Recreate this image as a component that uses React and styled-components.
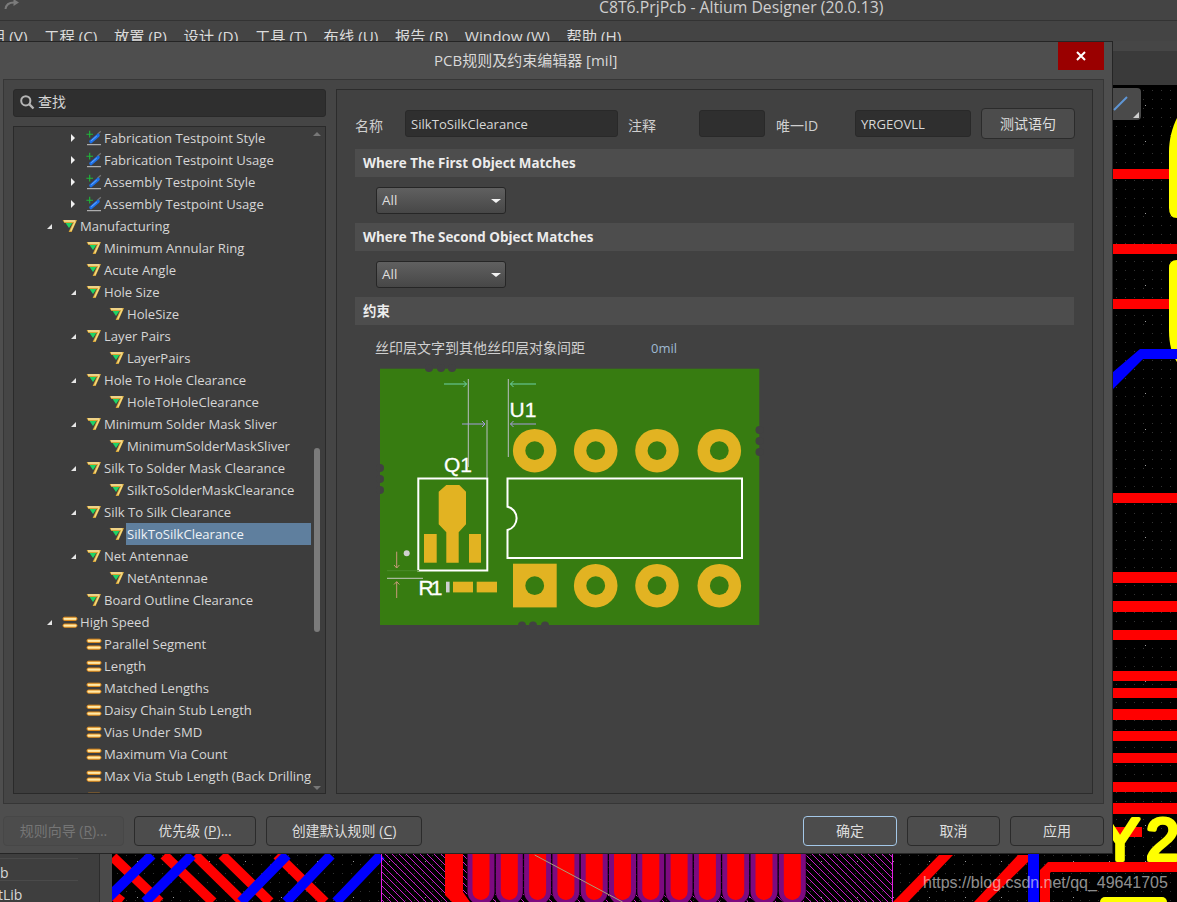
import React from "react";
import styled, { createGlobalStyle } from "styled-components";

const UI = `"Open Sans", "Noto Sans CJK SC", sans-serif`;
const CJK = `"Open Sans", "Noto Sans CJK SC", sans-serif`;

const Global = createGlobalStyle`
  html, body { margin: 0; padding: 0; background: #3c3c3c; }
  * { box-sizing: border-box; }
`;

const Page = styled.div`
  position: relative; width: 1177px; height: 902px; overflow: hidden;
  display: flex; flex-direction: column; background: #3c3c3c; font-family: ${UI}; color: #d6d6d6;
`;
const Chrome = styled.header`flex: none; height: 41px; background: #444; overflow: hidden;`;
const TitleRow = styled.div`
  height: 21px; border-bottom: 1px solid #333; padding-left: 599px; position: relative;
  font-size: 15.75px; line-height: 15px; color: #cfcfcf; white-space: nowrap;
`;
const RedoIcon = styled.svg`position: absolute; left: 4px; top: -1px;`;
const MenuRow = styled.nav`
  display: flex; gap: 16.7px; margin-left: -10px; height: 20px; padding-top: 5px;
  font-size: 15.3px; line-height: 20px; color: #dcdcdc; white-space: nowrap;
`;
const Workspace = styled.div`position: relative; flex: 1; display: flex; flex-direction: column; min-height: 0;`;
const ToolStrip = styled.div`flex: none; height: 44px; background: #3a3a3a; border-top: 10px solid #464646;`;
const Body = styled.div`flex: 1; display: flex; min-height: 0;`;
const SidePanel = styled.aside`
  flex: none; width: 100px; background: #3e3e3e; border-right: 1px solid #2c2c2c;
  display: flex; flex-direction: column; justify-content: flex-end;
`;
const SideRow = styled.div`
  height: 22px; width: 78px; border-top: 1px solid #4a4a4a; font-size: 14px; line-height: 28px; color: #d8d8d8;
  padding-left: ${p => p.$pad}px; white-space: nowrap; overflow: hidden;
`;
const Gutter = styled.div`flex: none; width: 12px; background: #4a4a4a;`;
const Canvas = styled.div`flex: 1; position: relative; background: #000; min-width: 0;`;
const CanvasArt = styled.svg`display: block; width: 100%; height: 100%;`;
const FloatTool = styled.div`
  position: absolute; left: 1001px; top: 3px; width: 28px; height: 32px; background: #4a4a4a;
  border-radius: 0 4px 4px 0;
`;
const Watermark = styled.div`
  position: absolute; left: 923px; top: 873px; font: 16px/20px "Liberation Sans", sans-serif;
  color: rgba(235,235,235,.62); white-space: nowrap; letter-spacing: -0.02px;
`;

const Dialog = styled.section`
  position: absolute; left: 0; top: 0; width: 1113px; height: 813px;
  background: #4e4e4e; border: 1px solid #252525; border-left: 0;
  display: flex; flex-direction: column;
`;
const DialogHead = styled.div`flex: none; height: 37px; display: flex; align-items: flex-start;`;
const DialogTitle = styled.div`
  flex: 1; padding-left: 434px; font: 15px/37px ${CJK}; color: #d8d8d8; white-space: nowrap;
`;
const CloseButton = styled.div`
  width: 46px; height: 28px; margin-right: 8px; background: #9a0000; display: flex; align-items: center; justify-content: center;
`;
const MainPanel = styled.div`
  flex: none; height: 725px; margin: 0 8px 0 3px; padding: 9px 10px 9px 9px;
  border: 1px solid #363636; background: #454545; display: flex; gap: 10px;
`;
const LeftColumn = styled.div`flex: none; width: 313px; display: flex; flex-direction: column; gap: 9px;`;
const SearchBox = styled.div`
  flex: none; height: 28px; padding-bottom: 2px; background: #2f2f2f; border: 1px solid #292929; border-radius: 3px;
  display: flex; align-items: center; gap: 3px; padding-left: 5px; font: 14px/1 ${CJK}; color: #d4d4d4;
`;
const Tree = styled.div`
  flex: 1; min-height: 0; display: flex; background: #3d3d3d; border: 1px solid #2a2a2a; overflow: hidden;
`;
const RowList = styled.div`flex: none; width: 297px; overflow: hidden;`;
const Row = styled.div`
  height: 22px; display: flex; align-items: center; padding-left: ${p => p.$pad}px;
  font-size: 13.1px; color: #d6d6d6; white-space: nowrap;
`;
const CaretSlot = styled.span`flex: none; width: 14px; height: 22px; display: flex; align-items: center; justify-content: center;`;
const IconSlot = styled.span`flex: none; width: 16px; height: 16px; margin: 0 2px 0 6px; display: block;`;
const RowLabel = styled.span`
  flex: 1; min-width: 0; overflow: hidden; height: 22px; line-height: 22px; margin-left: -1px; padding-left: 1px;
  background: ${p => (p.$selected ? "#5f7f9e" : "transparent")};
  color: ${p => (p.$selected ? "#eef2f6" : "inherit")};
`;
const ScrollColumn = styled.div`flex: 1; display: flex; flex-direction: column; align-items: center; padding-right: 2px; padding-top: 5px;`;
const Thumb = styled.div`flex: none; width: 6px; height: 184px; margin-top: 312px; background: #7b7b7b; border-radius: 3px;`;
const ArrowUp = styled.div`flex: none; width: 0; height: 0; border: 4px solid transparent; border-top: 0; border-bottom: 4px solid #777;`;
const ArrowDown = styled.div`flex: none; width: 0; height: 0; margin-top: 154px; border: 4px solid transparent; border-bottom: 0; border-top: 4px solid #777;`;

const RightPanel = styled.div`
  flex: 1; min-width: 0; background: #414141; border: 1px solid #2c2c2c; padding: 18px 18px 0;
`;
const TopRow = styled.div`display: flex; align-items: center; height: 31px; font: 14px/1 ${CJK}; color: #cfcfcf;`;
const FieldLabel = styled.span`flex: none; width: ${p => p.$w}px; padding-top: 4px;`;
const TextInput = styled.div`
  flex: none; width: ${p => p.$w}px; height: 27px; margin-right: 10px; padding-left: 5px;
  background: #2f2f2f; border: 1px solid #292929; border-radius: 3px;
  font: 13.1px/26px ${UI}; color: #d8d8d8;
`;
const Button = styled.div`
  flex: none; width: ${p => p.$w}px; height: ${p => p.$h || 30}px;
  display: flex; align-items: center; justify-content: center; white-space: nowrap;
  background: #4c4c4c; border: 1px solid ${p => (p.$focus ? "#a4c8e8" : p.$off ? "#474747" : "#2b2b2b")};
  border-radius: 4px; font: 14px/1 ${CJK}; color: ${p => (p.$off ? "#757575" : "#dedede")};
  u { text-underline-offset: 2px; }
`;
const SectionBar = styled.div`
  height: 28px; margin-top: ${p => p.$mt}px; background: #4d4d4d; padding-left: 8px;
  font: 700 13.4px/29px ${CJK}; color: #ececec; white-space: nowrap;
`;
const SelectBox = styled.div`
  width: 130px; height: 27px; margin: 10px 0 9px 21px; padding: 0 4px 0 5px; display: flex; align-items: center; justify-content: space-between;
  background: linear-gradient(#606060, #474747); border: 1px solid #262626; border-radius: 3px;
  font: 13.5px/1 ${UI}; color: #dedede;
`;
const SelectCaret = styled.span`
  width: 0; height: 0; border: 5px solid transparent; border-top: 4px solid #f2f2f2; border-bottom: 0;
`;
const ConstraintRow = styled.div`
  display: flex; height: 22px; margin: 12px 0 0 20px; font: 14px/22px ${CJK}; color: #cfcfcf; white-space: nowrap;
`;
const ConstraintValue = styled.span`margin-left: 66px; color: #9fb9d2; font-size: 13px;`;
const BoardArt = styled.svg`display: block; margin: 1px 0 0 15px; width: 400px; height: 275px;`;

const Footer = styled.footer`
  flex: 1; display: flex; align-items: flex-start; gap: 10px; padding: 12px 8px 0 3px;
`;
const Spacer = styled.div`flex: 1;`;

const Caret = ({ open }) =>
  open ? (
    <svg width="8" height="8" viewBox="0 0 8 8"><path d="M7 2V7H2Z" fill="#e6e6e6" /></svg>
  ) : (
    <svg width="6" height="10" viewBox="0 0 6 10"><path d="M1 1L5 5L1 9Z" fill="#f0f0f0" /></svg>
  );

const TestpointIcon = () => (
  <svg width="16" height="16" viewBox="0 0 16 16" style={{ display: "block" }}>
    <path d="M3.7 .8V7.6M.4 4.2H7" stroke="#1fb83a" strokeWidth="1.1" />
    <path d="M11.5 4.2L14.8 1.2" stroke="#777" strokeWidth="1.2" />
    <path d="M5 11.6L12 5.4" stroke="#1c6fe8" strokeWidth="3.4" strokeLinecap="round" />
    <path d="M5.6 10.5L10.5 6.2" stroke="#6fb2ff" strokeWidth="1" strokeLinecap="round" />
    <path d="M1 14.7H15" stroke="#c9c9c9" strokeWidth="1" />
  </svg>
);
const ManufIcon = () => (
  <svg width="16" height="16" viewBox="0 0 16 16" style={{ display: "block" }}>
    <path d="M3.6 5H10.4L7 10Z" fill="#1fd465" />
    <path d="M.6 2H15L9.6 14H6.6L10.8 5H2.4Z" fill="#d8a636" />
    <path d="M2 3H13.4" stroke="#fff2bf" strokeWidth="1.2" />
    <path d="M13.2 3.4L8.8 13" stroke="#f4dc86" strokeWidth="1.3" />
  </svg>
);
const SpeedIcon = () => (
  <svg width="16" height="16" viewBox="0 0 16 16" style={{ display: "block" }}>
    <rect x="1" y="3.2" width="14" height="3.2" rx="1.6" fill="#ffe9a8" stroke="#e48a14" strokeWidth="1" />
    <rect x="1" y="10" width="14" height="3.2" rx="1.6" fill="#ffe9a8" stroke="#e48a14" strokeWidth="1" />
  </svg>
);
const ICONS = { t: TestpointIcon, m: ManufIcon, s: SpeedIcon };
const PAD = { 1: 28, 2: 52, 3: 75 };

const ROWS = [
  [2, "t", "r", "Fabrication Testpoint Style"],
  [2, "t", "r", "Fabrication Testpoint Usage"],
  [2, "t", "r", "Assembly Testpoint Style"],
  [2, "t", "r", "Assembly Testpoint Usage"],
  [1, "m", "d", "Manufacturing"],
  [2, "m", "", "Minimum Annular Ring"],
  [2, "m", "", "Acute Angle"],
  [2, "m", "d", "Hole Size"],
  [3, "m", "", "HoleSize"],
  [2, "m", "d", "Layer Pairs"],
  [3, "m", "", "LayerPairs"],
  [2, "m", "d", "Hole To Hole Clearance"],
  [3, "m", "", "HoleToHoleClearance"],
  [2, "m", "d", "Minimum Solder Mask Sliver"],
  [3, "m", "", "MinimumSolderMaskSliver"],
  [2, "m", "d", "Silk To Solder Mask Clearance"],
  [3, "m", "", "SilkToSolderMaskClearance"],
  [2, "m", "d", "Silk To Silk Clearance"],
  [3, "m", "", "SilkToSilkClearance", true],
  [2, "m", "d", "Net Antennae"],
  [3, "m", "", "NetAntennae"],
  [2, "m", "", "Board Outline Clearance"],
  [1, "s", "d", "High Speed"],
  [2, "s", "", "Parallel Segment"],
  [2, "s", "", "Length"],
  [2, "s", "", "Matched Lengths"],
  [2, "s", "", "Daisy Chain Stub Length"],
  [2, "s", "", "Vias Under SMD"],
  [2, "s", "", "Maximum Via Count"],
  [2, "s", "", "Max Via Stub Length (Back Drilling)"],
  [2, "s", "", "Return Path"],
];

const MENUS = ["用 (V)", "工程 (C)", "放置 (P)", "设计 (D)", "工具 (T)", "布线 (U)", "报告 (R)", "Window (W)", "帮助 (H)"];

const RED_BARS = [
  [169, 10, 1169], [244, 10, 1177], [299, 10, 1169], [493, 10, 1177], [572, 11, 1177], [601, 11, 1177],
  [630, 10, 1177], [671, 10, 1177], [688, 10, 1177], [709, 11, 1177], [731, 10, 1177], [753, 10, 1177],
  [782, 10, 1177], [803, 11, 1177], [827, 10, 1142],
];
const FINGERS = Array.from({ length: 12 }, (_, i) => 481 + i * 28.3);

const PcbBackground = () => (
  <CanvasArt viewBox="112 85 1065 817" preserveAspectRatio="none">
    <defs>
      <pattern id="fine" x="0" y="0" width="9" height="9" patternUnits="userSpaceOnUse">
        <rect width="1" height="1" fill="#333" />
      </pattern>
      <pattern id="coarse" x="1145" y="105" width="36" height="36" patternUnits="userSpaceOnUse">
        <rect width="1" height="1" fill="#9a9a9a" />
      </pattern>
      <pattern id="hatch" x="0" y="0" width="7" height="7" patternUnits="userSpaceOnUse">
        <path d="M-1 -1L8 8M-8 -1L1 8M6 -1L15 8" stroke="#e01fe0" strokeWidth=".9" />
      </pattern>
    </defs>
    <rect x="112" y="85" width="1065" height="817" fill="#000" />
    <rect x="112" y="85" width="1065" height="817" fill="url(#fine)" />
    <rect x="112" y="85" width="1065" height="817" fill="url(#coarse)" />

    {RED_BARS.map(([y, h, end]) => (
      <rect key={y} x="1100" y={y} width={end - 1100} height={h} fill="#f00" />
    ))}
    <path d="M1177 118C1172 128 1169 140 1169 152V208Q1169 218 1177 218Z" fill="#ff0" />
    <path d="M1177 260H1177Q1169 260 1169 268V330C1169 345 1172 354 1177 362Z" fill="#ff0" />
    <path d="M1113 372L1140 349H1177V359H1143L1113 389Z" fill="#00f" />
    <text x="1100" y="860" fontFamily="Liberation Sans" fontSize="60" letterSpacing="6" fill="#ff0" stroke="#ff0" strokeWidth="4" strokeLinejoin="round">Y2</text>

    <g stroke="#f00" strokeWidth="10">
      <path d="M113 857L160 902M164 855L213 902M195 855L243 902M222 855L270 902M277 855L325 902M113 895L122 902" />
    </g>
    <g stroke="#00f" strokeWidth="10">
      <path d="M108 898L152 855M192 855L145 902M287 855L241 902M331 855L286 902M381 855L336 902" />
    </g>

    <rect x="381" y="854" width="512" height="48" fill="url(#hatch)" />
    <path d="M381.5 854V902M892.5 854V902" stroke="#e01fe0" strokeWidth="1" />
    <path d="M445 854H463V892L470 902H452L445 895Z" fill="#f00" />
    {FINGERS.map(x => (
      <g key={x}>
        <line x1={x} y1="850" x2={x} y2="891.5" stroke="#000" strokeWidth="28.4" strokeLinecap="round" />
        <line x1={x} y1="850" x2={x} y2="891.5" stroke="#7d0a80" strokeWidth="27" strokeLinecap="round" />
        <line x1={x} y1="850" x2={x} y2="891.5" stroke="#f00" strokeWidth="17" strokeLinecap="round" />
      </g>
    ))}
    <path d="M534.7 855L622.6 902" stroke="#a9a07a" strokeWidth="1" />

    <path d="M893 902L939 855H953L908 902Z" fill="#f00" />
    <path d="M974 902L1018 855H1028V862L987 902Z" fill="#f00" />
    <rect x="1028" y="854" width="11" height="48" fill="#00f" />
    <path d="M1040 902V870L1048 862H1177V872H1051L1050 873V902Z" fill="#f00" />
    <rect x="1100" y="897" width="67" height="12" rx="5" fill="#ff0" />
  </CanvasArt>
);

const PAD_X = [164.7, 225.7, 287, 349.3];

const BoardPicture = () => (
  <BoardArt viewBox="0 0 400 275">
    <rect x="10" y="8.7" width="379.3" height="256.3" fill="#377c11" />
    <g fill="#414141">
      {[59, 71, 82].map(x => <circle key={x} cx={x} cy="8" r="4" />)}
      {[152, 163, 175].map(x => <circle key={x} cx={x} cy="265.5" r="4" />)}
      {[108, 119, 130].map(y => <circle key={y} cx="10" cy={y} r="4" />)}
      {[70, 81, 92].map(y => <circle key={y} cx="389.5" cy={y} r="4" />)}
    </g>
    <rect x="143" y="203.7" width="43.7" height="43.7" fill="#e2b322" />
    {PAD_X.map((x, i) => (
      <g key={x}>
        <circle cx={x} cy="90.7" r="21.8" fill="#e2b322" />
        <circle cx={x} cy="90.7" r="9.4" fill="#377c11" />
        {i > 0 && <circle cx={x} cy="225.7" r="21.8" fill="#e2b322" />}
        <circle cx={x} cy="225.7" r="9.4" fill="#377c11" />
      </g>
    ))}
    <path d="M137.5 118.5H372V198H137.5V170A12 12 0 0 0 137.5 146.7Z" fill="none" stroke="#fff" strokeWidth="2" />
    <rect x="48.3" y="118.5" width="69" height="92" fill="none" stroke="#fff" strokeWidth="2" />
    <path d="M76.3 125H89.3L96 131.7V164.3L88.7 172.3V202.7H76.3V172.3L68.7 164.3V131.7Z" fill="#e2b322" />
    <rect x="54" y="174" width="12.7" height="28.7" fill="#e2b322" />
    <rect x="99" y="174" width="12" height="28.7" fill="#e2b322" />
    <rect x="83" y="221.7" width="20" height="10.7" fill="#e2b322" />
    <rect x="106.7" y="221.7" width="20.3" height="10.7" fill="#e2b322" />
    <rect x="76" y="221.7" width="3.6" height="10.7" fill="#cfcfcf" />
    <g fontFamily="Liberation Sans" fontSize="21" fill="#fff" stroke="#fff" strokeWidth=".3">
      <text x="74" y="112">Q1</text>
      <text x="139.5" y="57">U1</text>
      <text x="48.5" y="234.5" textLength="24">R1</text>
    </g>
    <g fill="none" strokeWidth="1">
      <path d="M98.3 19V107M117 60V118M138.3 19V97" stroke="#b9bfc4" />
      <path d="M74 24H96.5M93.5 21L96.5 24L93.5 27M166 24H140.5M143.5 21L140.5 24L143.5 27" stroke="#6fd0a8" />
      <path d="M92 64H115M112 61L115 64L112 67M166 64H140.5M143.5 61L140.5 64L143.5 67" stroke="#a69ce0" />
      <path d="M26.7 191.7V208M24 205L26.7 208L29.4 205M26.7 238V221.7M24 224.5L26.7 221.7L29.4 224.5" stroke="#c99a7a" />
      <path d="M17 210.7H49" stroke="#4b8c2a" />
      <path d="M17 218.3H53" stroke="#c4c9c0" />
    </g>
    <circle cx="36.7" cy="193.3" r="3" fill="#d0d0d0" />
  </BoardArt>
);

export default function App() {
  return (
    <Page>
      <Global />
      <Chrome>
        <TitleRow>
          <RedoIcon width="16" height="11" viewBox="0 0 16 11">
            <path d="M1.5 10C2 6 5 3.5 10 3.5" fill="none" stroke="#7b7b7b" strokeWidth="2" />
            <path d="M9.5 0L15 3.5L9.5 7Z" fill="#7b7b7b" />
          </RedoIcon>
          C8T6.PrjPcb - Altium Designer (20.0.13)
        </TitleRow>
        <MenuRow>
          {MENUS.map(m => <span key={m}>{m}</span>)}
        </MenuRow>
      </Chrome>
      <Workspace>
        <ToolStrip />
        <Body>
          <SidePanel>
            <SideRow $pad={0}> </SideRow>
            <SideRow $pad={0}>b</SideRow>
            <SideRow $pad={0} style={{ textIndent: "-2px" }}>tLib</SideRow>
          </SidePanel>
          <Gutter />
          <Canvas>
            <PcbBackground />
            <FloatTool>
              <svg width="28" height="32" viewBox="0 0 28 32">
                <path d="M1 22L14 9" stroke="#5f96d6" strokeWidth="2" />
                <path d="M28 26V32H22Z" fill="#cfcfcf" transform="translate(-2,-2)" />
              </svg>
            </FloatTool>
          </Canvas>
        </Body>
        <Dialog>
          <DialogHead>
            <DialogTitle>PCB规则及约束编辑器 [mil]</DialogTitle>
            <CloseButton>
              <svg width="10" height="10" viewBox="0 0 10 10">
                <path d="M1 1L9 9M9 1L1 9" stroke="#fff" strokeWidth="2" />
              </svg>
            </CloseButton>
          </DialogHead>
          <MainPanel>
            <LeftColumn>
              <SearchBox>
                <svg width="16" height="16" viewBox="0 0 16 16">
                  <circle cx="6.8" cy="6.8" r="4.6" fill="none" stroke="#b5b5b5" strokeWidth="2" />
                  <path d="M10.2 10.2L14.5 14.5" stroke="#b5b5b5" strokeWidth="2.4" />
                </svg>
                查找
              </SearchBox>
              <Tree>
                <RowList>
                  {ROWS.map(([lvl, ic, car, label, sel]) => {
                    const Ico = ICONS[ic];
                    return (
                      <Row key={label} $pad={PAD[lvl]}>
                        <CaretSlot>{car && <Caret open={car === "d"} />}</CaretSlot>
                        <IconSlot><Ico /></IconSlot>
                        <RowLabel $selected={sel}>{label}</RowLabel>
                      </Row>
                    );
                  })}
                </RowList>
                <ScrollColumn>
                  <ArrowUp />
                  <Thumb />
                  <ArrowDown />
                </ScrollColumn>
              </Tree>
            </LeftColumn>
            <RightPanel>
              <TopRow>
                <FieldLabel $w={50}>名称</FieldLabel>
                <TextInput $w={213}>SilkToSilkClearance</TextInput>
                <FieldLabel $w={71}>注释</FieldLabel>
                <TextInput $w={66} style={{ marginRight: 11 }} />
                <FieldLabel $w={79}>唯一ID</FieldLabel>
                <TextInput $w={116}>YRGEOVLL</TextInput>
                <Button $w={94} $h={31}>测试语句</Button>
              </TopRow>
              <SectionBar $mt={10}>Where The First Object Matches</SectionBar>
              <SelectBox>All<SelectCaret /></SelectBox>
              <SectionBar $mt={0}>Where The Second Object Matches</SectionBar>
              <SelectBox>All<SelectCaret /></SelectBox>
              <SectionBar $mt={0}>约束</SectionBar>
              <ConstraintRow>
                丝印层文字到其他丝印层对象间距
                <ConstraintValue>0mil</ConstraintValue>
              </ConstraintRow>
              <BoardPicture />
            </RightPanel>
          </MainPanel>
          <Footer>
            <Button $w={121} $off>规则向导 (<u>R</u>)...</Button>
            <Button $w={122}>优先级 (<u>P</u>)...</Button>
            <Button $w={156}>创建默认规则 (<u>C</u>)</Button>
            <Spacer />
            <Button $w={94} $focus>确定</Button>
            <Button $w={93}>取消</Button>
            <Button $w={94}>应用</Button>
          </Footer>
        </Dialog>
      </Workspace>
      <Watermark>https://blog.csdn.net/qq_49641705</Watermark>
    </Page>
  );
}
